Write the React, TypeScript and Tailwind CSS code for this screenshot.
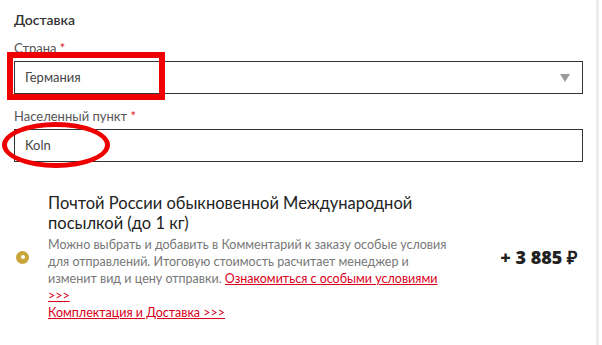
import React from 'react';

const font = { fontFamily: '"Lato", "Noto Sans", sans-serif' };

const Label = ({ text }: { text: string }) => (
  <div className="text-[13px] leading-[16px] text-[#555]">
    {text} <span className="text-[#e0202a]">*</span>
  </div>
);

export default function App() {
  return (
    <div className="relative h-[345px] w-[602px] overflow-hidden bg-white" style={font}>
      <div className="h-full w-[599px] border-r-[3px] border-[#ececec] pl-[14px] pr-[13px]">
        <div className="pt-[11px] text-[14px] font-semibold leading-[18px] text-[#333]">Доставка</div>

        <div className="mt-[11px]">
          <Label text="Страна" />
          <div className="mt-[5px] flex h-[33px] items-center justify-between border border-[#333] pl-[10px] pr-[12px]">
            <span className="text-[13px] text-[#444]">Германия</span>
            <svg width="10" height="8" viewBox="0 0 10 8">
              <path d="M0 0 H10 L5 8 Z" fill="#9a9a9a" />
            </svg>
          </div>
        </div>

        <div className="mt-[14px]">
          <Label text="Населенный пункт" />
          <div className="mt-[5px] flex h-[33px] items-center border border-[#333] pl-[10px]">
            <span className="text-[13px] text-[#444]">Koln</span>
          </div>
        </div>

        <div className="mt-[31px] flex items-center">
          <div className="ml-[2px] flex h-[13px] w-[13px] shrink-0 items-center justify-center rounded-full bg-[#c9a53a]">
            <div className="h-[4px] w-[4px] rounded-full bg-white" />
          </div>
          <div className="ml-[19px] w-[410px]">
            <div className="text-[16.5px] leading-[20px] text-[#222]">
              Почтой России обыкновенной Международной посылкой (до 1 кг)
            </div>
            <div className="mt-[3px] text-[12.5px] leading-[17px] text-[#777]">
              Можно выбрать и добавить в Комментарий к заказу особые условия для отправлений. Итоговую
              стоимость расчитает менеджер и изменит вид и цену отправки.{' '}
              <a className="text-[#d9001b] underline">Ознакомиться с особыми условиями &gt;&gt;&gt;</a>
              <br />
              <a className="text-[#d9001b] underline">Комплектация и Доставка &gt;&gt;&gt;</a>
            </div>
          </div>
          <div
            className="ml-auto pr-[6px] text-[18px] font-extrabold text-[#222]"
            style={{ fontFamily: '"Open Sans", "Lato", sans-serif' }}
          >
            + 3 885 ₽
          </div>
        </div>
      </div>

      <div className="pointer-events-none absolute left-[7px] top-[52px] h-[48px] w-[158px] border-[6px] border-[#ee0000]" />
      <div className="pointer-events-none absolute left-[2px] top-[122px] h-[46px] w-[108px] rounded-[50%] border-[5px] border-[#ee0000]" />
    </div>
  );
}
